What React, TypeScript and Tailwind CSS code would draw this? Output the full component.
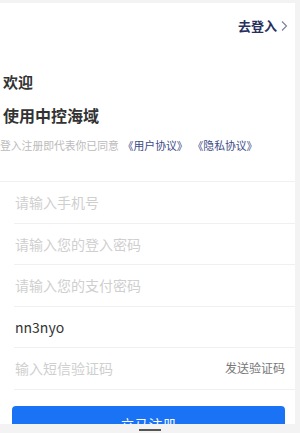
import React from "react";

const font = { fontFamily: '"Noto Sans CJK SC", "Noto Sans", sans-serif' };

function Row({ children, right }: { children: React.ReactNode; right?: React.ReactNode }) {
  return (
    <div className="ml-[14px] h-[41.5px] flex items-center justify-between border-b border-[#f0f0f0] pl-[1px] pr-[10px]">
      <div className="text-[14px] leading-none">{children}</div>
      {right}
    </div>
  );
}

export default function App() {
  return (
    <div className="w-[300px] h-[433px] bg-[#f3f3f3] overflow-hidden flex flex-col" style={font}>
      <div className="mt-[3px] mr-[5px] h-[421px] bg-white overflow-hidden flex flex-col">
        <div className="flex justify-end pt-[14px] pr-[6px]">
          <span className="text-[13px] font-bold text-[#27305c] leading-[18px] flex items-center">
            去登入
            <svg width="9" height="12" viewBox="0 0 9 12" className="ml-[3px]">
              <path d="M2 1.5 L6.5 6 L2 10.5" fill="none" stroke="#7a7f95" strokeWidth="1.1" />
            </svg>
          </span>
        </div>
        <div className="pl-[3px] mt-[37px] text-[15px] font-bold text-[#333] leading-[20px]">欢迎</div>
        <div className="pl-[3px] mt-[12px] text-[16px] font-bold text-[#333] leading-[22px]">使用中控海域</div>
        <div className="mt-[12px] flex items-center text-[10.8px] leading-[14px]">
          <span className="text-[#bbb]">登入注册即代表你已同意</span>
          <span className="ml-[4px] text-[#3d4a86]">《用户协议》</span>
          <span className="ml-[5px] text-[#3d4a86]">《隐私协议》</span>
        </div>
        <div className="mt-[29px] border-t border-[#f0f0f0] flex flex-col">
          <Row><span className="text-[#cfcfcf]">请输入手机号</span></Row>
          <Row><span className="text-[#cfcfcf]">请输入您的登入密码</span></Row>
          <Row><span className="text-[#cfcfcf]">请输入您的支付密码</span></Row>
          <Row><span className="text-[#333]">nn3nyo</span></Row>
          <Row right={<span className="text-[12px] text-[#777]">发送验证码</span>}>
            <span className="text-[#cfcfcf]">输入短信验证码</span>
          </Row>
        </div>
        <div className="mt-[16px] ml-[12px] mr-[10px] h-[40px] rounded-[4px] bg-[#1a73f5] flex items-start justify-center pt-[8px]">
          <span className="text-[14px] text-white leading-[20px]">立马注册</span>
        </div>
      </div>
      <div className="flex-1 flex justify-center items-center">
        <div className="w-[22px] h-[2px] bg-[#555] mt-[2px]" />
      </div>
    </div>
  );
}
